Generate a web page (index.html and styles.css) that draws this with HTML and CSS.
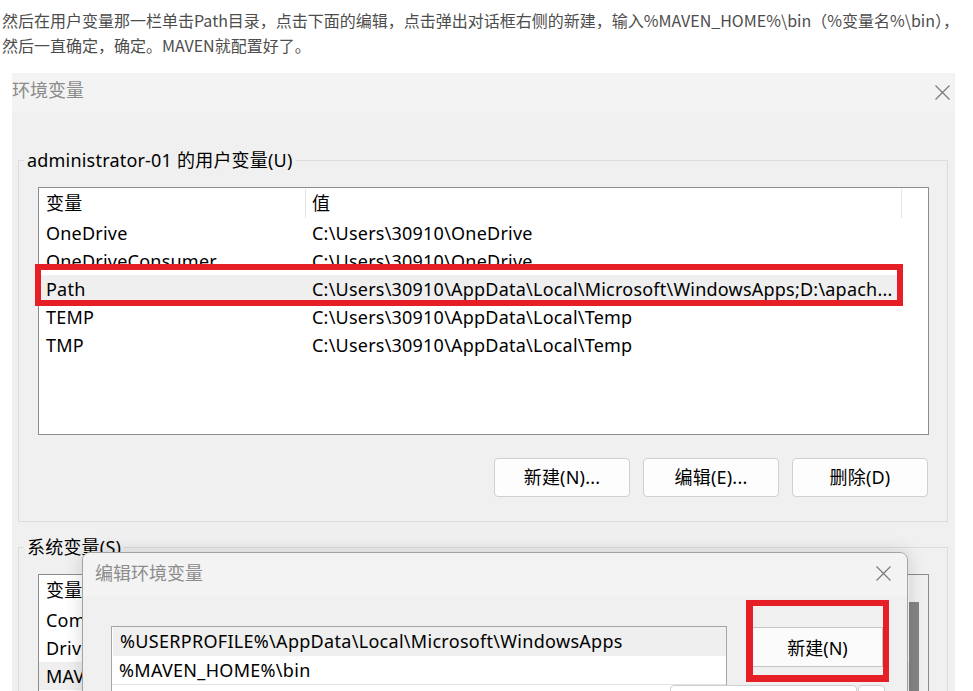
FILE: index.html
```html
<!DOCTYPE html>
<html lang="zh-CN">
<head>
<meta charset="utf-8">
<title>环境变量</title>
<link rel="stylesheet" href="styles.css">
</head>
<body>
<p class="intro">然后在用户变量那一栏单击Path目录，点击下面的编辑，点击弹出对话框右侧的新建，输入%MAVEN_HOME%\bin（%变量名%\bin），<br>然后一直确定，确定。MAVEN就配置好了。</p>

<div class="win">
  <div class="win-title">
    <span class="title-text">环境变量</span>
    <svg class="close" width="15" height="15" viewBox="0 0 15 15"><path d="M0.5 0.5 L14.5 14.5 M14.5 0.5 L0.5 14.5" stroke="#7a7a7a" stroke-width="1.2" fill="none"/></svg>
  </div>
  <div class="win-body">
    <fieldset class="group">
      <legend>administrator-01 的用户变量(U)</legend>
      <div class="list user-list">
        <div class="row head"><span class="c1">变量</span><span class="c2">值</span><span class="c3"></span></div>
        <div class="row"><span class="c1">OneDrive</span><span class="c2">C:\Users\30910\OneDrive</span></div>
        <div class="row"><span class="c1">OneDriveConsumer</span><span class="c2">C:\Users\30910\OneDrive</span></div>
        <div class="row sel"><span class="c1">Path</span><span class="c2">C:\Users\30910\AppData\Local\Microsoft\WindowsApps;D:\apach...</span></div>
        <div class="row"><span class="c1">TEMP</span><span class="c2">C:\Users\30910\AppData\Local\Temp</span></div>
        <div class="row"><span class="c1">TMP</span><span class="c2">C:\Users\30910\AppData\Local\Temp</span></div>
      </div>
      <div class="btns">
        <button class="btn">新建(N)...</button>
        <button class="btn">编辑(E)...</button>
        <button class="btn">删除(D)</button>
      </div>
    </fieldset>

    <fieldset class="group sys">
      <legend>系统变量(S)</legend>
      <div class="list sys-list">
        <div class="rows">
          <div class="row head"><span class="c1">变量</span><span class="c2">值</span></div>
          <div class="row"><span class="c1">ComSpec</span><span class="c2">C:\WINDOWS\system32\cmd.exe</span></div>
          <div class="row"><span class="c1">DriverData</span><span class="c2">C:\Windows\System32\Drivers\DriverData</span></div>
          <div class="row sel"><span class="c1">MAVEN_HOME</span><span class="c2">D:\apache-maven-3.8.1</span></div>
        </div>
        <div class="scroll"><div class="thumb"></div></div>
      </div>
    </fieldset>
  </div>
</div>

<div class="edit-win">
  <div class="edit-title">
    <span class="edit-title-text">编辑环境变量</span>
    <svg class="close" width="15" height="15" viewBox="0 0 15 15"><path d="M0.5 0.5 L14.5 14.5 M14.5 0.5 L0.5 14.5" stroke="#7a7a7a" stroke-width="1.2" fill="none"/></svg>
  </div>
  <div class="edit-body">
    <div class="edit-list">
      <div class="erow sel">%USERPROFILE%\AppData\Local\Microsoft\WindowsApps</div>
      <div class="erow last">%MAVEN_HOME%\bin</div>
    </div>
    <div class="edit-side">
      <button class="ebtn">新建(N)</button>
    </div>
  </div>
  <div class="edit-tail">
    <div class="tail-box wide"></div>
    <div class="tail-box narrow"></div>
  </div>
</div>

<div class="mark mark-path"></div>
<div class="mark mark-new"></div>
</body>
</html>
```

FILE: styles.css
```css
html, body {
  margin: 0;
  padding: 0;
  width: 973px;
  height: 691px;
  overflow: hidden;
  background: #ffffff;
}

body {
  position: relative;
  font-family: "Noto Sans", "Noto Sans CJK SC", sans-serif;
}

.intro {
  margin: 0;
  padding: 8px 0 0 2px;
  font-family: "Noto Sans CJK SC", sans-serif;
  font-size: 16px;
  line-height: 25px;
  color: #4d4d4d;
  white-space: nowrap;
}

.win {
  margin: 15px 0 0 12px;
  width: 943px;
  height: 640px;
  background: #f0f0f0;
}

.win-title {
  height: 39px;
  background: #f3f3f3;
  display: flex;
  align-items: center;
  justify-content: space-between;
  padding-right: 5px;
  box-sizing: border-box;
}

.title-text {
  font-size: 18px;
  color: #8a8a8a;
  line-height: 24px;
  margin-top: -6px;
}

.close {
  display: block;
}

.win-body {
  padding: 0 0 0 6px;
}

.group {
  margin: 36px 0 0 0;
  padding: 0 20px 24px 19px;
  width: 930px;
  box-sizing: border-box;
  border: 1px solid #dcdcdc;
  min-inline-size: 0;
}

.group.sys {
  margin-top: 13px;
  padding-bottom: 0;
}

.group legend {
  margin-left: -14px;
  padding: 0 3px;
  font-size: 18px;
  line-height: 24px;
  letter-spacing: 0.2px;
  color: #000;
}

.list {
  margin-top: 15px;
  width: 891px;
  box-sizing: border-box;
  border: 1px solid #8c8c8c;
  background: #ffffff;
}

.user-list {
  height: 248px;
}

.row {
  display: flex;
  height: 28px;
  line-height: 28px;
  font-size: 18px;
  letter-spacing: 0.22px;
  color: #000;
  white-space: nowrap;
}

.row.head {
  height: 31px;
  line-height: 31px;
}

.row.sel {
  background: #efefef;
  margin-right: 27px;
}

.c1 {
  width: 266px;
  padding-left: 7px;
  box-sizing: border-box;
  overflow: hidden;
}

.c2 {
  width: 596px;
  padding-left: 7px;
  box-sizing: border-box;
  overflow: hidden;
}

.c3 {
  flex: 1;
}

.head .c2,
.head .c3 {
  border-left: 1px solid #e5e5e5;
  padding-left: 6px;
  margin: 1px 0 1px 0;
  line-height: 29px;
}

.btns {
  display: flex;
  justify-content: flex-end;
  gap: 13px;
  margin-top: 23px;
  margin-right: -1px;
}

.btn {
  width: 136px;
  height: 39px;
  box-sizing: border-box;
  border: 1px solid #d0d0d0;
  border-radius: 4px;
  background: #fdfdfd;
  font-family: "Noto Sans", "Noto Sans CJK SC", sans-serif;
  font-size: 18px;
  letter-spacing: 0.2px;
  color: #000;
  padding: 0;
  line-height: 37px;
}

.sys-list {
  height: 200px;
  display: flex;
}

.sys-list .rows {
  flex: 1;
}

.sys-list .row.sel {
  margin-right: 0;
}

.scroll {
  width: 19px;
  background: #f0f0f0;
  padding-top: 27px;
  box-sizing: border-box;
}

.thumb {
  width: 10px;
  height: 90px;
  background: #858585;
}

/* edit dialog */
.edit-win {
  position: absolute;
  left: 82px;
  top: 552px;
  width: 826px;
  height: 170px;
  box-sizing: border-box;
  border: 1px solid #a3a3a3;
  border-radius: 8px 8px 0 0;
  background: #f0f0f0;
  box-shadow: 0 0 18px rgba(0, 0, 0, 0.16);
  overflow: hidden;
}

.edit-title {
  height: 43px;
  background: #f3f3f3;
  display: flex;
  align-items: center;
  justify-content: space-between;
  padding: 0 16px 0 12px;
}

.edit-title-text {
  font-size: 18px;
  line-height: 24px;
  color: #8c8c8c;
  margin-top: -4px;
}

.edit-title .close {
  margin-top: -2px;
}

.edit-body {
  display: flex;
  padding: 30px 0 0 28px;
  gap: 25px;
}

.edit-list {
  width: 616px;
  height: 120px;
  box-sizing: border-box;
  border: 1px solid #a5a5a5;
  background: #ffffff;
}

.erow {
  height: 28px;
  line-height: 28px;
  padding-left: 7px;
  font-size: 18px;
  letter-spacing: 0.3px;
  color: #000;
  white-space: nowrap;
}

.erow.sel {
  height: 29px;
  line-height: 29px;
  background: #efefef;
  margin-left: 1px;
}

.erow.last {
  border-bottom: 1px solid #e3e3e3;
}

.edit-side {
  padding-top: 1px;
}

.ebtn {
  width: 131px;
  height: 40px;
  box-sizing: border-box;
  border: 1px solid #c4c4c4;
  background: #fbfbfb;
  font-family: "Noto Sans", "Noto Sans CJK SC", sans-serif;
  font-size: 18px;
  color: #000;
  padding: 0;
}

.edit-tail {
  position: absolute;
  left: 587px;
  top: 132px;
  display: flex;
  gap: 1px;
}

.tail-box {
  height: 20px;
  box-sizing: border-box;
  border: 1px solid #cfcfcf;
  border-radius: 4px 4px 0 0;
  background: #ffffff;
}

.tail-box.wide {
  width: 187px;
}

.tail-box.narrow {
  width: 27px;
}

/* annotation frames */
.mark {
  position: absolute;
  box-sizing: border-box;
  border: 6px solid #e61f26;
}

.mark-path {
  left: 35px;
  top: 264px;
  width: 868px;
  height: 42px;
}

.mark-new {
  left: 746px;
  top: 600px;
  width: 143px;
  height: 82px;
  border-width: 6px 6px 7px 7px;
}
```
